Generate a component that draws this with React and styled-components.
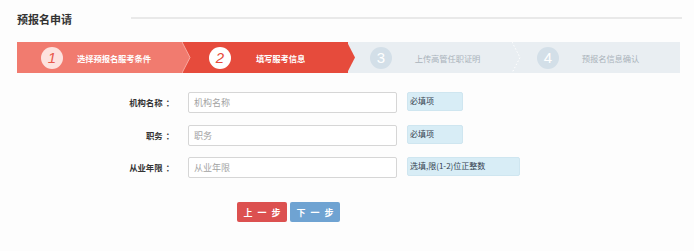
import React from "react";
import styled, { createGlobalStyle } from "styled-components";

const Global = createGlobalStyle`
  html, body { margin: 0; padding: 0; background: #ffffff; }
  body { font-family: "Noto Sans CJK SC", "Liberation Sans", sans-serif; }
`;

const Page = styled.div`
  width: 694px;
  height: 251px;
  box-sizing: border-box;
  padding: 0 14px 0 17px;
  background: #fdfdfd;
`;

const Header = styled.div`
  display: flex;
  align-items: center;
  height: 38px;
`;

const Title = styled.h1`
  margin: 0;
  font-size: 11px;
  font-weight: 700;
  color: #333;
  line-height: 1;
`;

const Rule = styled.div`
  flex: 1;
  height: 2px;
  margin-left: 59px;
  margin-right: -2px;
  margin-top: -3px;
  background: #e9e9e9;
`;

const Stepper = styled.div`
  display: flex;
  height: 31px;
  margin-top: 4px;
`;

const Step = styled.div`
  position: relative;
  display: flex;
  align-items: center;
  flex: 0 0 ${(p) => p.$w}px;
  background: ${(p) => p.$bg};
  padding-left: ${(p) => p.$pl}px;
  box-sizing: border-box;
`;

const Arrow = styled.svg`
  position: absolute;
  top: 0;
  right: -8px;
  z-index: 2;
`;

const Circle = styled.div`
  width: 22px;
  height: 22px;
  border-radius: 50%;
  background: ${(p) => p.$bg};
  color: ${(p) => p.$fg};
  display: flex;
  align-items: center;
  justify-content: center;
  font-family: "Liberation Sans", Arial, sans-serif;
  font-style: ${(p) => (p.$italic ? "italic" : "normal")};
  font-size: 15px;
  flex: 0 0 auto;
`;

const StepLabel = styled.span`
  flex: 1;
  text-align: center;
  padding-right: ${(p) => p.$pr}px;
  font-size: 8.3px;
  font-weight: ${(p) => (p.$active ? 700 : 400)};
  color: ${(p) => p.$fg};
  white-space: nowrap;
  letter-spacing: -0.1px;
`;

const Form = styled.div`
  display: flex;
  flex-direction: column;
  gap: 11.5px;
  margin-top: 19px;
`;

const Row = styled.div`
  display: flex;
  align-items: flex-start;
`;

const Label = styled.label`
  width: 157px;
  text-align: right;
  font-size: 8.4px;
  font-weight: 700;
  color: #333;
  line-height: 21px;
  margin-right: 14px;
`;

const Colon = styled.span`
  margin-left: 3px;
`;

const Input = styled.input`
  width: 209px;
  height: 21px;
  box-sizing: border-box;
  border: 1px solid #d6d6d6;
  border-radius: 2px;
  background: #fff;
  padding: 0 0 0 5px;
  font-family: "Noto Sans CJK SC", "Liberation Sans", sans-serif;
  font-size: 9px;
  outline: none;
  &::placeholder { color: #a3a3a3; }
`;

const Hint = styled.div`
  margin-left: 10px;
  width: ${(p) => p.$w}px;
  height: 19px;
  box-sizing: border-box;
  padding-left: 2px;
  background: #d8edf6;
  border: 1px solid #cfe6f0;
  border-radius: 2px;
  font-size: 8px;
  line-height: 16px;
  color: #34424f;
  white-space: nowrap;
`;

const Buttons = styled.div`
  display: flex;
  gap: 3px;
  padding-left: 220px;
  margin-top: 24px;
`;

const Button = styled.button`
  width: 50px;
  height: 20px;
  border: none;
  border-radius: 2px;
  background: ${(p) => p.$bg};
  color: #fff;
  font-family: "Noto Sans CJK SC", "Liberation Sans", sans-serif;
  font-size: 9px;
  font-weight: 700;
  padding: 0;
  word-spacing: 3px;
  cursor: pointer;
`;

const steps = [
  { n: "1", label: "选择预报名服考条件", w: 166, pl: 24, pr: 18, bg: "#f17b6f", cbg: "#fde2de", cfg: "#e9584b", fg: "#fff", active: true, arrow: "light" },
  { n: "2", label: "填写服考信息", w: 165, pl: 26, pr: 18, bg: "#e64b3c", cbg: "#ffffff", cfg: "#e64b3c", fg: "#fff", active: true, arrow: "solid" },
  { n: "3", label: "上传高管任职证明", w: 165, pl: 22, pr: 10, bg: "#e9eef2", cbg: "#d3dfe8", cfg: "#fff", fg: "#aab3bb", arrow: "dots" },
  { n: "4", label: "预报名信息确认", w: 167, pl: 24, pr: 18, bg: "#e9eef2", cbg: "#d3dfe8", cfg: "#fff", fg: "#aab3bb" },
];

function StepArrow({ kind, color }) {
  if (kind === "light") {
    return (
      <Arrow width="9" height="31" viewBox="0 0 9 31">
        <polygon points="0,0 8,15.5 0,31" fill={color} />
        <polyline points="0,0 8,15.5 0,31" fill="none" stroke="#f7a79e" strokeWidth="1" />
      </Arrow>
    );
  }
  if (kind === "solid") {
    return (
      <Arrow width="9" height="31" viewBox="0 0 9 31">
        <polygon points="0,0 8,15.5 0,31" fill={color} />
      </Arrow>
    );
  }
  return (
    <Arrow width="9" height="31" viewBox="0 0 9 31">
      <polyline points="0,0 8,15.5 0,31" fill="none" stroke="#ffffff" strokeWidth="1" strokeDasharray="1.5 2" />
    </Arrow>
  );
}

const fields = [
  { label: "机构名称", ph: "机构名称", hint: "必填项", hw: 56 },
  { label: "职务", ph: "职务", hint: "必填项", hw: 56 },
  { label: "从业年限", ph: "从业年限", hint: "选填,限(1-2)位正整数", hw: 113 },
];

export default function App() {
  return (
    <>
      <Global />
      <Page>
        <Header>
          <Title>预报名申请</Title>
          <Rule />
        </Header>
        <Stepper>
          {steps.map((s) => (
            <Step key={s.n} $w={s.w} $bg={s.bg} $pl={s.pl}>
              <Circle $bg={s.cbg} $fg={s.cfg} $italic={s.active}>{s.n}</Circle>
              <StepLabel $fg={s.fg} $active={s.active} $pr={s.pr}>{s.label}</StepLabel>
              {s.arrow && <StepArrow kind={s.arrow} color={s.bg} />}
            </Step>
          ))}
        </Stepper>
        <Form>
          {fields.map((f) => (
            <Row key={f.label}>
              <Label>{f.label}<Colon>：</Colon></Label>
              <Input placeholder={f.ph} />
              <Hint $w={f.hw}>{f.hint}</Hint>
            </Row>
          ))}
        </Form>
        <Buttons>
          <Button $bg="#dc5150">上 一 步</Button>
          <Button $bg="#6fa3d2">下 一 步</Button>
        </Buttons>
      </Page>
    </>
  );
}
